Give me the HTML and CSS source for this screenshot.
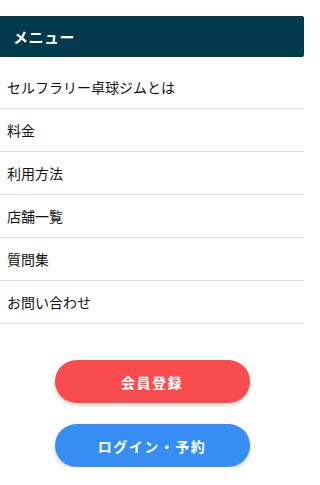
FILE: index.html
```html
<!DOCTYPE html>
<html lang="ja">
<head>
<meta charset="utf-8">
<link rel="stylesheet" href="styles.css">
</head>
<body>
<nav class="drawer">
  <div class="drawer-title">メニュー</div>
  <ul class="menu">
    <li class="menu-item">セルフラリー卓球ジムとは</li>
    <li class="menu-item">料金</li>
    <li class="menu-item">利用方法</li>
    <li class="menu-item">店舗一覧</li>
    <li class="menu-item">質問集</li>
    <li class="menu-item">お問い合わせ</li>
  </ul>
  <div class="actions">
    <a class="btn btn-register">会員登録</a>
    <a class="btn btn-login">ログイン・予約</a>
  </div>
</nav>
</body>
</html>
```
FILE: styles.css
```css
html, body {
  margin: 0;
  padding: 0;
  background: #ffffff;
}
body {
  font-family: "Noto Sans CJK JP", "Noto Sans", sans-serif;
  color: #111;
}
.drawer {
  width: 304px;
  padding-top: 16px;
}
.drawer-title {
  height: 41px;
  display: flex;
  align-items: center;
  padding-left: 13px;
  background: #03394d;
  color: #fff;
  font-weight: 700;
  font-size: 15px;
  letter-spacing: 0.5px;
  border-radius: 0 2px 2px 0;
  margin-bottom: 9px;
}
.menu {
  list-style: none;
  margin: 0;
  padding: 0;
}
.menu-item {
  height: 42px;
  display: flex;
  align-items: center;
  padding-left: 7px;
  font-size: 14px;
  border-bottom: 1px solid #dedede;
}
.actions {
  display: flex;
  flex-direction: column;
  align-items: center;
  gap: 21px;
  padding-top: 36px;
}
.btn {
  width: 195px;
  height: 43px;
  border-radius: 22px;
  display: flex;
  align-items: center;
  justify-content: center;
  color: #fff;
  font-weight: 700;
  font-size: 14px;
  letter-spacing: 1.5px;
  box-shadow: 0 2px 4px rgba(0,0,0,0.2);
}
.btn-register { background: #f94c4e; }
.btn-login { background: #368ef5; }
```
